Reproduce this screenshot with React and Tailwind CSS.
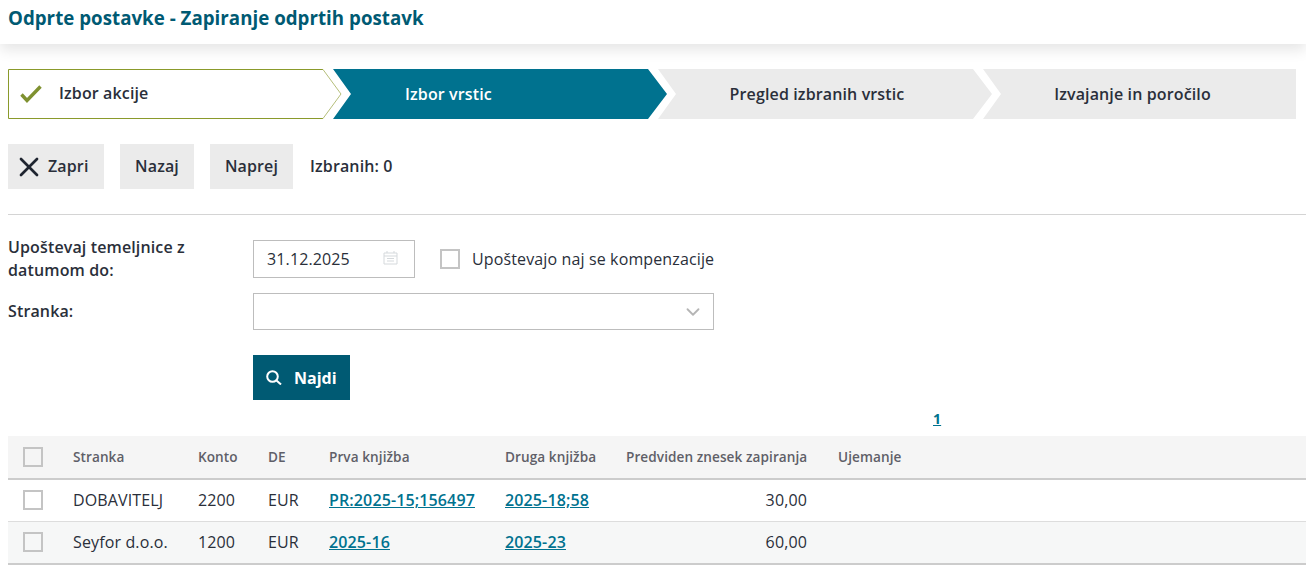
import { X, ChevronDown } from 'lucide-react'

const font = { fontFamily: '"Open Sans", sans-serif' }
const rowGrid = 'grid grid-cols-[65px_125px_70px_61px_176px_121px_181px_1fr] items-center'

function Box({ bg = 'bg-white' }) {
  return <span className={`block w-[20px] h-[20px] border-2 border-[#c4c4c4] ${bg}`} />
}

function Row({ name, konto, first, second, amount, bg, height }) {
  return (
    <div className={`${rowGrid} ${height} ${bg} pb-[1px]`}>
      <div className="pl-[15px]"><Box bg={bg} /></div>
      <div>{name}</div>
      <div>{konto}</div>
      <div>EUR</div>
      <a className="font-semibold text-[#00728f] underline">{first}</a>
      <a className="font-semibold text-[#00728f] underline">{second}</a>
      <div className="text-right">{amount}</div>
      <div />
    </div>
  )
}

export default function App() {
  return (
    <div style={font} className="w-[1306px] h-[580px] overflow-hidden bg-white text-[16px] tracking-[0.13px] text-[#2a2f3a] relative">
      {/* Header */}
      <div className="h-[44px] px-2 bg-white shadow-[0_6px_14px_rgba(0,0,0,0.1)] flex items-start">
        <h1 className="text-[18.72px] leading-[36px] font-bold tracking-[0.02px] text-[#005a73]">Odprte postavke - Zapiranje odprtih postavk</h1>
      </div>

      {/* Wizard */}
      <div className="flex mt-[25px] ml-2">
        <div className="relative w-[334px] h-[50px] shrink-0 flex items-center">
          <svg className="absolute inset-0" width="334" height="50" viewBox="0 0 334 50">
            <path d="M315 .5H.5v49H315" fill="none" stroke="#8a9a2b" />
            <path d="M315 .5L333 25 315 49.5" fill="none" stroke="#b5be7a" />
          </svg>
          <svg className="relative ml-[12px] mb-[1px]" width="22" height="18" viewBox="0 0 22 18" fill="none" stroke="#7f9130" strokeWidth="3.4">
            <path d="M1.500 9.500L7 15.500 20.500 1.500" />
          </svg>
          <span className="relative ml-[17px] mb-[2px] font-semibold">Izbor akcije</span>
        </div>
        <div className="w-[334px] h-[50px] shrink-0 -ml-[9px] pl-[72px] flex items-center justify-start bg-[#00728f] text-white font-semibold [clip-path:polygon(0_0,315px_0,100%_50%,315px_100%,0_100%,18px_50%)]">
          Izbor vrstic
        </div>
        <div className="w-[334px] h-[50px] shrink-0 -ml-[9px] pr-[16px] flex items-center justify-center bg-[#ebebeb] font-semibold [clip-path:polygon(0_0,315px_0,100%_50%,315px_100%,0_100%,18px_50%)]">
          Pregled izbranih vrstic
        </div>
        <div className="w-[313px] h-[50px] shrink-0 -ml-[9px] pr-[14px] flex items-center justify-center bg-[#ebebeb] font-semibold [clip-path:polygon(0_0,100%_0,100%_100%,0_100%,18px_50%)]">
          Izvajanje in poročilo
        </div>
      </div>

      {/* Toolbar */}
      <div className="flex items-center mt-[25px] ml-2 h-[45px] font-semibold">
        <button className="h-full w-[96px] bg-[#ebebeb] flex items-center pl-[5px] gap-[3px] font-semibold">
          <X size={32} strokeWidth={2} className="text-[#1f2530]" />
          <span className="mb-[1px]">Zapri</span>
        </button>
        <button className="h-full w-[74px] ml-4 pb-[1px] bg-[#ebebeb] font-semibold">Nazaj</button>
        <button className="h-full w-[83px] ml-4 pb-[1px] bg-[#ebebeb] font-semibold">Naprej</button>
        <span className="ml-[17px] mb-[1px]">Izbranih: 0</span>
      </div>

      <div className="ml-2 mt-[25px] border-t border-[#d4d4d4]" />

      {/* Filter form */}
      <div className="ml-2 mt-[21px] grid grid-cols-[245px_1fr] font-normal">
        <label className="font-semibold leading-[23px]">Upoštevaj temeljnice z<br />datumom do:</label>
        <div className="flex items-center h-[38px] mt-[4px]">
          <div className="w-[162px] h-full border border-[#bdbdbd] flex items-center justify-between pl-[13px] pr-[16px]">
            <span>31.12.2025</span>
            <svg className="mb-[3px]" width="15" height="15" viewBox="0 0 15 15" fill="none" stroke="#d5d9dc" strokeWidth="1">
              <path d="M1 3h13v11H1zM1 6h13M4 1v2M11 1v2M4 8.500h7M4 11h7" />
            </svg>
          </div>
          <span className="ml-[25px]"><Box /></span>
          <span className="ml-[12px]">Upoštevajo naj se kompenzacije</span>
        </div>

        <label className="font-semibold mt-[17px] leading-[24px]">Stranka:</label>
        <div className="mt-[11px] w-[461px] h-[37px] border border-[#bdbdbd] flex items-center justify-end pr-[9px]">
          <ChevronDown size={22} strokeWidth={2} className="text-[#b5b5b5] mt-[1px]" />
        </div>

        <div />
        <button className="mt-[25px] w-[97px] h-[45px] bg-[#005a73] text-white font-bold tracking-normal flex items-center pl-[13px] gap-[12px]">
          <svg width="16" height="15" viewBox="0 0 16 15" fill="none" stroke="currentColor" strokeWidth="2">
            <circle cx="6.500" cy="6.500" r="5.300" />
            <path d="M10.500 10.500L15 14.500" />
          </svg>
          Najdi
        </button>
      </div>

      {/* Pagination */}
      <div className="h-[36px] ml-[933px] flex items-center">
        <a className="font-bold text-[14px] text-[#00728f] underline">1</a>
      </div>

      {/* Table */}
      <div className="ml-2">
        <div className={`${rowGrid} h-[44px] bg-[#f5f5f5] border-b-[2px] border-[#cccccc] text-[13.6px] tracking-[0.07px] font-semibold text-[#5f5f68]`}>
          <div className="pl-[15px]"><Box bg="bg-[#f5f5f5]" /></div>
          <div>Stranka</div>
          <div>Konto</div>
          <div>DE</div>
          <div>Prva knjižba</div>
          <div>Druga knjižba</div>
          <div className="text-right whitespace-nowrap">Predviden znesek zapiranja</div>
          <div className="pl-[31px]">Ujemanje</div>
        </div>
        <Row name="DOBAVITELJ" konto="2200" first="PR:2025-15;156497" second="2025-18;58" amount="30,00" bg="bg-white" height="h-[41px]" />
        <div className="border-t border-[#dddddd]" />
        <Row name="Seyfor d.o.o." konto="1200" first="2025-16" second="2025-23" amount="60,00" bg="bg-[#f6f7f7]" height="h-[41px]" />
        <div className="border-t-2 border-[#cccccc]" />
      </div>
    </div>
  )
}
